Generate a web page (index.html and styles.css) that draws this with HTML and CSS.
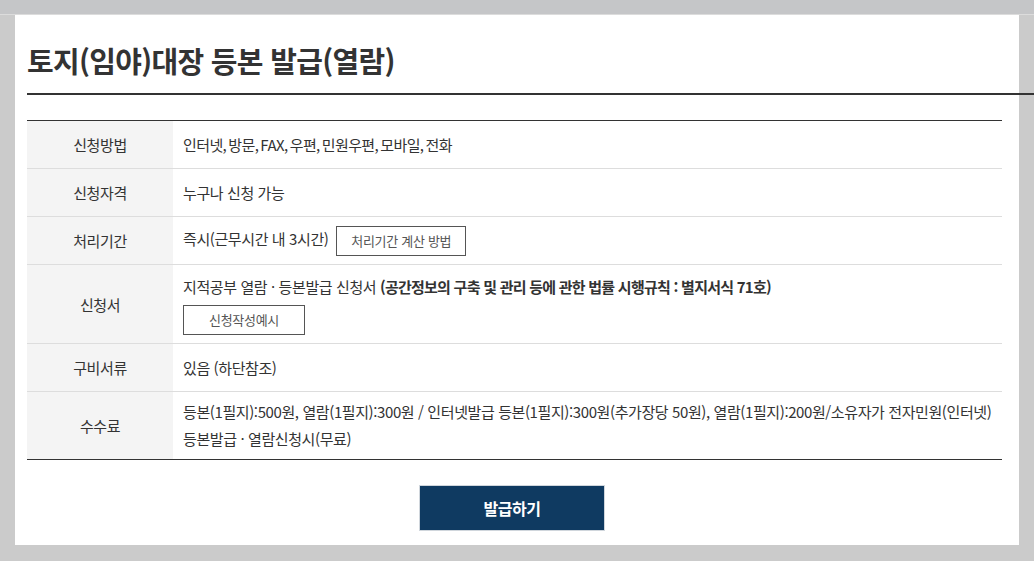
FILE: index.html
```html
<!DOCTYPE html>
<html lang="ko">
<head>
<meta charset="utf-8">
<title>토지(임야)대장 등본 발급(열람)</title>
<link rel="stylesheet" href="styles.css">
</head>
<body>
<div class="topbar"></div>
<div class="page">
  <div class="panel">
    <h2 class="title">토지(임야)대장 등본 발급(열람)</h2>
    <table class="info">
      <tbody>
        <tr>
          <th>신청방법</th>
          <td class="tight">인터넷, 방문, FAX, 우편, 민원우편, 모바일, 전화</td>
        </tr>
        <tr>
          <th>신청자격</th>
          <td>누구나 신청 가능</td>
        </tr>
        <tr>
          <th>처리기간</th>
          <td class="btn-cell">즉시(근무시간 내 3시간) <span class="btn-line btn-calc">처리기간 계산 방법</span></td>
        </tr>
        <tr>
          <th>신청서</th>
          <td class="form-cell">
            <div>지적공부 열람 · 등본발급 신청서 <strong>(공간정보의 구축 및 관리 등에 관한 법률 시행규칙 : 별지서식 71호)</strong></div>
            <span class="btn-line btn-example">신청작성예시</span>
          </td>
        </tr>
        <tr>
          <th>구비서류</th>
          <td>있음 (하단참조)</td>
        </tr>
        <tr>
          <th>수수료</th>
          <td class="fee-cell">등본(1필지):500원, 열람(1필지):300원 / 인터넷발급 등본(1필지):300원(추가장당 50원), 열람(1필지):200원/소유자가 전자민원(인터넷)<br>등본발급 · 열람신청시(무료)</td>
        </tr>
      </tbody>
    </table>
    <div class="actions">
      <span class="btn-primary">발급하기</span>
    </div>
  </div>
</div>
</body>
</html>
```

FILE: styles.css
```css
html, body {
  margin: 0;
  padding: 0;
}
body {
  background: #cbcbcb;
  font-family: "Noto Sans CJK KR", "Noto Sans", sans-serif;
  color: #333;
  width: 1034px;
  height: 561px;
  overflow: hidden;
}
.topbar {
  height: 15px;
  background: #c5c6c8;
  border-bottom: 1px solid #dcdcdc;
  box-sizing: border-box;
}
.page {
  padding: 0 15px 0 15px;
}
.panel {
  background: #fff;
  padding: 25px 17px 14px 12px;
  width: 1004px;
  box-sizing: border-box;
}
.title {
  margin: 0 -32px 0 0;
  font-size: 29px;
  line-height: 40px;
  font-weight: 700;
  letter-spacing: -0.7px;
  color: #333;
  padding-bottom: 13px;
  border-bottom: 2px solid #333;
}
.info {
  margin-top: 25px;
  width: 100%;
  border-collapse: collapse;
  border-top: 1px solid #333;
  border-bottom: 1px solid #333;
  font-size: 15px;
  letter-spacing: -0.4px;
}
.info th {
  width: 146px;
  box-sizing: border-box;
  background: #f4f4f4;
  font-weight: 400;
  color: #333;
  text-align: center;
  line-height: 27px;
  padding: 10px 0;
  border-bottom: 1px solid #ddd;
}
.info td {
  text-align: left;
  line-height: 27px;
  padding: 8px 0 8px 10px;
  color: #333;
  border-bottom: 1px solid #ddd;
}
.info td.tight {
  word-spacing: -1.5px;
  letter-spacing: -0.6px;
}
.info td.btn-cell {
  padding-top: 7px;
  padding-bottom: 7px;
}
.info tr:last-child th,
.info tr:last-child td {
  border-bottom: none;
}
.info td.fee-cell {
  padding-top: 6px;
  padding-bottom: 7px;
}
.info strong {
  font-weight: 700;
  letter-spacing: -0.75px;
}
.btn-line {
  display: inline-block;
  box-sizing: border-box;
  border: 1px solid #555;
  color: #555;
  font-size: 13px;
  line-height: 28px;
  height: 30px;
  text-align: center;
  vertical-align: middle;
  letter-spacing: -0.3px;
}
.btn-calc {
  width: 130px;
  margin-left: 4px;
}
.form-cell .btn-example {
  width: 122px;
  margin: 5px 0 0 0;
}
.actions {
  display: flex;
  justify-content: center;
  margin-top: 25px;
  padding-right: 5px;
}
.btn-primary {
  display: block;
  box-sizing: border-box;
  width: 186px;
  height: 46px;
  line-height: 44px;
  background: #0f3a61;
  border: 1px solid #d0d6dc;
  color: #fff;
  font-size: 16px;
  font-weight: 700;
  text-align: center;
  letter-spacing: -0.5px;
}
```
